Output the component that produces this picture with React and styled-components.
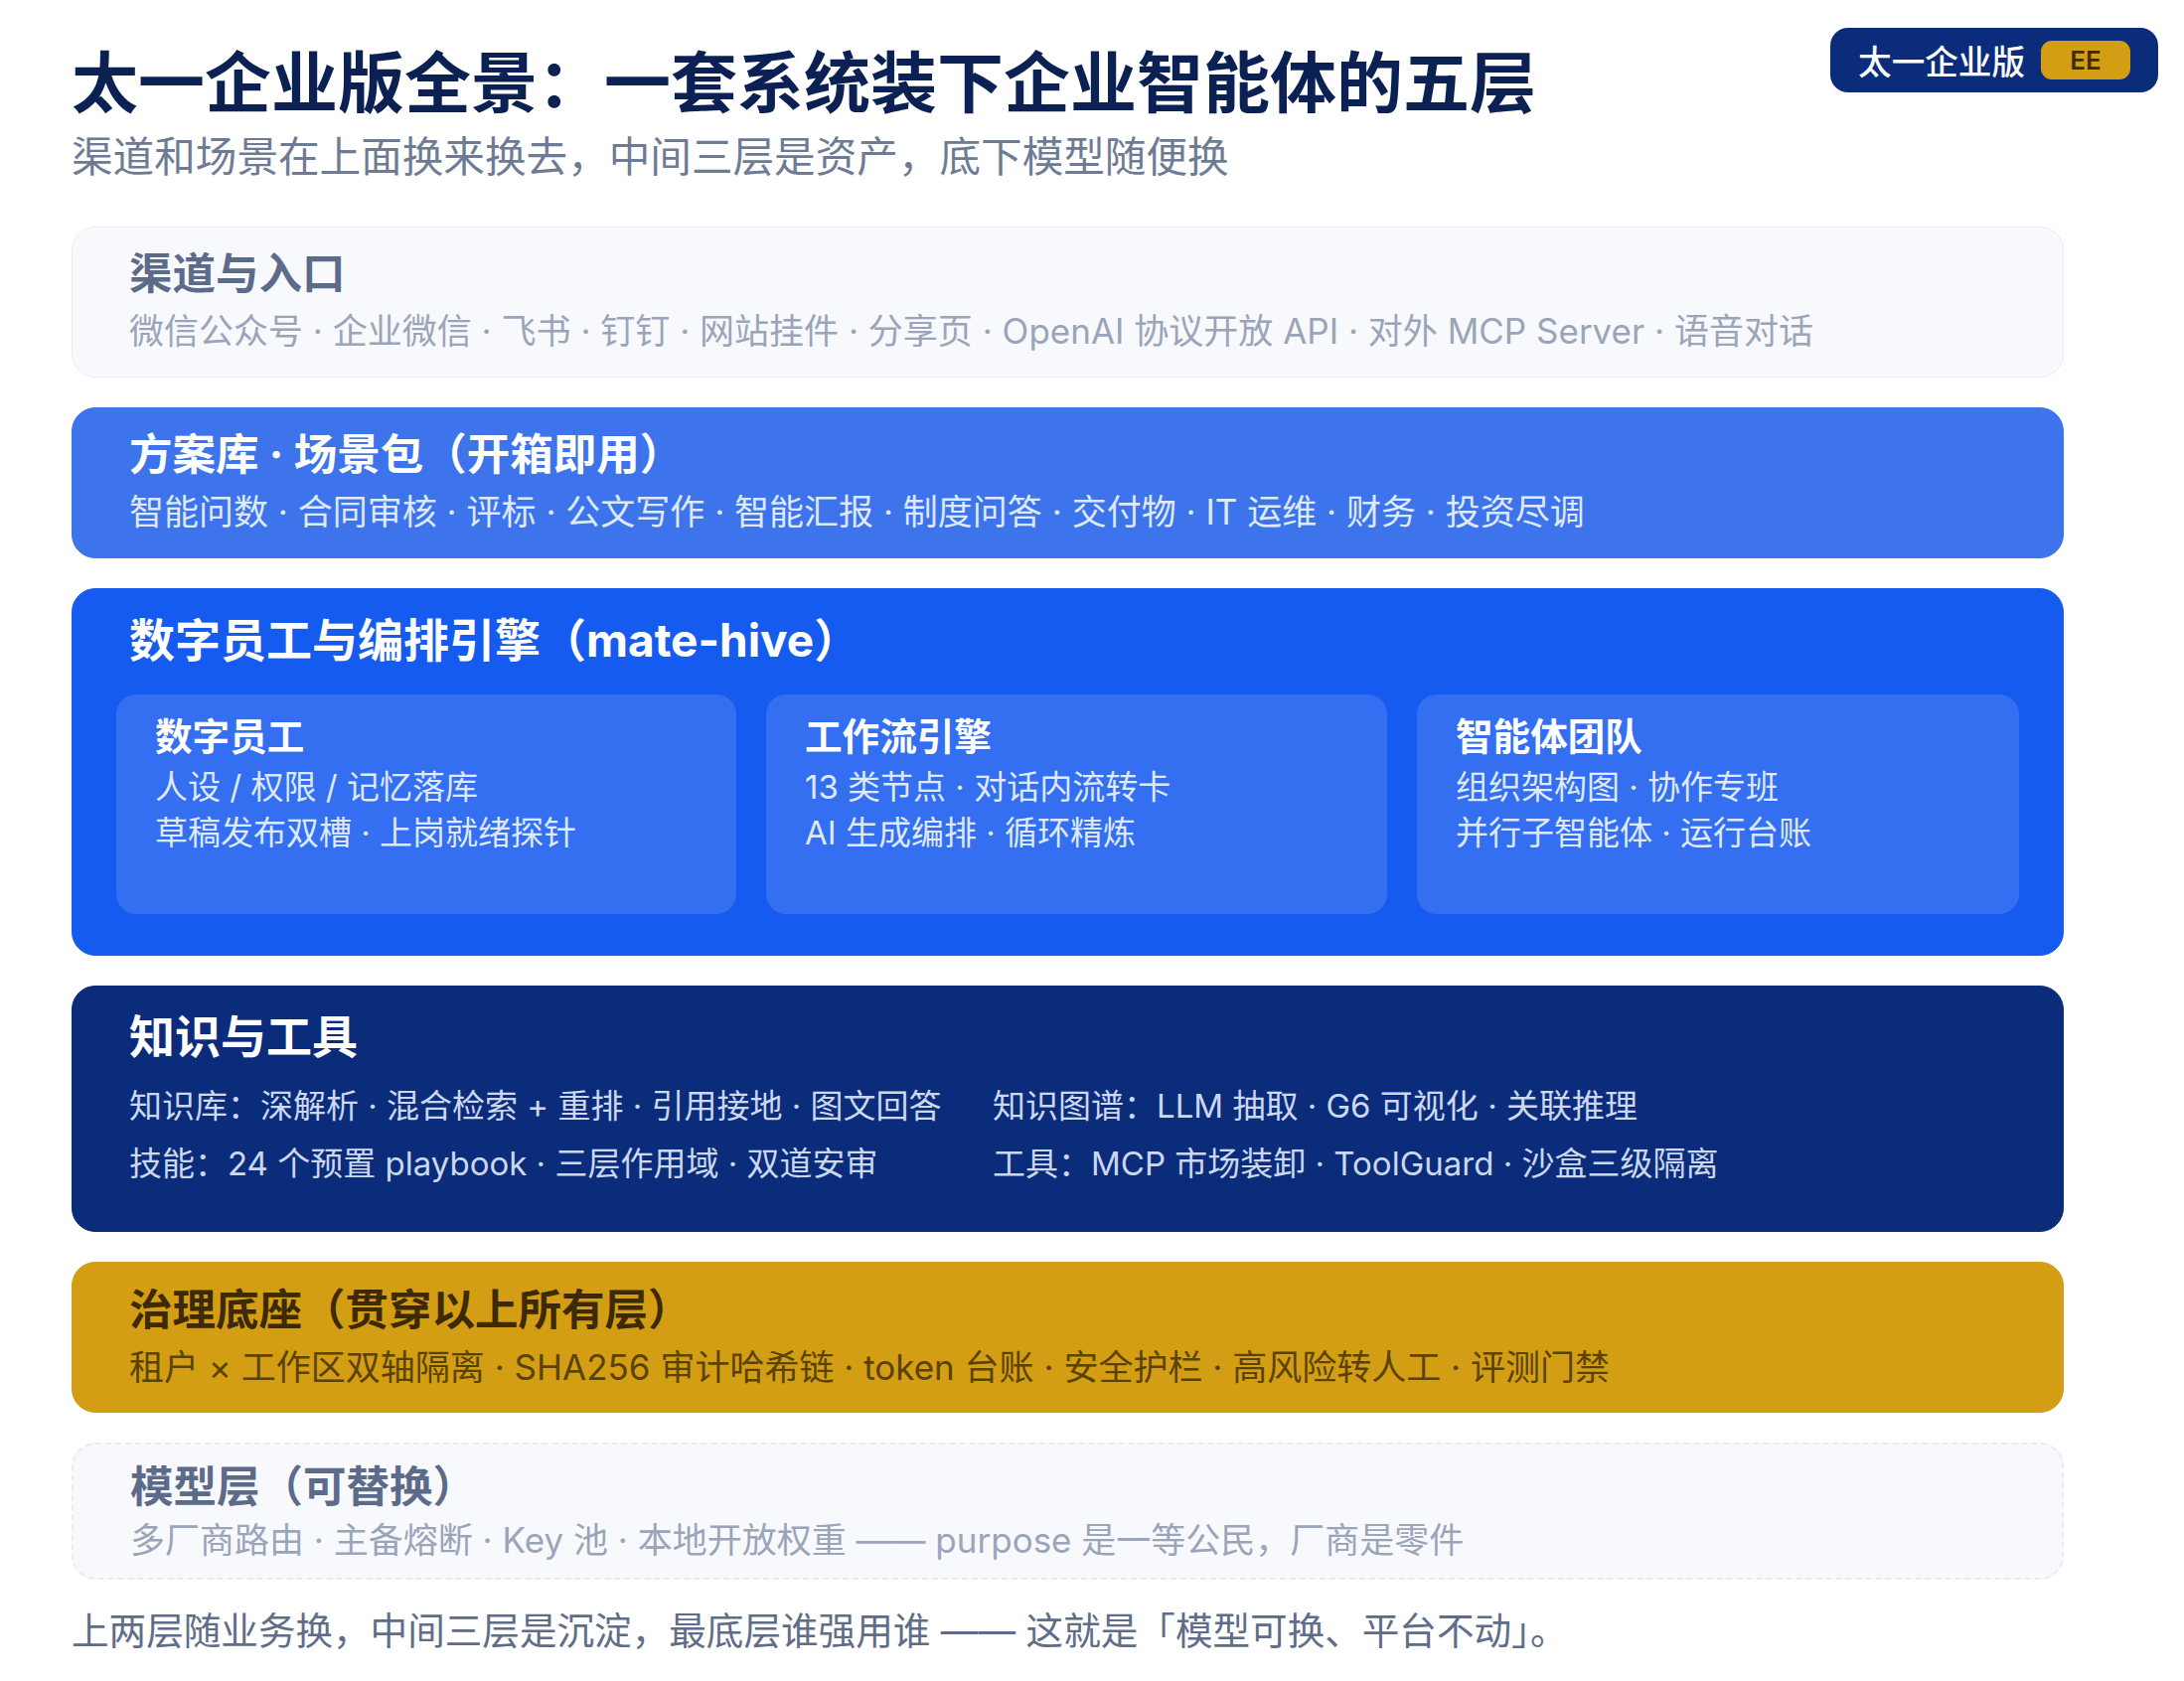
import React from "react";
import styled, { createGlobalStyle } from "styled-components";

const Global = createGlobalStyle`
  html, body { margin: 0; padding: 0; background: #fff; }
  body { font-family: Inter, "Noto Sans CJK SC", sans-serif; }
`;

const Page = styled.div`
  position: relative;
  width: 2198px;
  height: 1692px;
  box-sizing: border-box;
  padding: 44px 121px 0 72px;
  background: #fff;
`;

const Title = styled.h1`
  margin: 0;
  font-size: 67px;
  line-height: 80px;
  font-weight: 700;
  color: #0b2154;
  white-space: nowrap;
`;

const Subtitle = styled.p`
  margin: 9px 0 45px;
  font-size: 41.6px;
  line-height: 50px;
  color: #6e7b94;
  white-space: nowrap;
`;

const Badge = styled.div`
  position: absolute;
  top: 28px;
  right: 26px;
  height: 65px;
  box-sizing: border-box;
  padding: 0 28px;
  display: flex;
  align-items: center;
  gap: 16px;
  border-radius: 18px;
  background: #0b2c7a;
  color: #fff;
  font-size: 33.6px;
  font-weight: 500;
`;

const BadgeTag = styled.span`
  display: flex;
  align-items: center;
  justify-content: center;
  width: 90px;
  height: 39px;
  border-radius: 11px;
  background: #d39e14;
  color: #3d2a00;
  font-size: 26px;
  font-weight: 600;
`;

const Stack = styled.div`
  display: flex;
  flex-direction: column;
  gap: 30px;
`;

const tones = {
  ghost: { bg: "#f8f9fd", border: "1px solid #e8ecf5", title: "#5c6b8a", text: "#9aa5ba" },
  dashed: { bg: "#f8f9fd", border: "2px dashed #e8ecf5", title: "#5c6b8a", text: "#9aa5ba" },
  sky: { bg: "#3d74ec", border: "1px solid #3d74ec", title: "#ffffff", text: "#dfe9fd" },
  blue: { bg: "#155bef", border: "1px solid #155bef", title: "#ffffff", text: "#dfe9fd" },
  navy: { bg: "#0b2c7a", border: "1px solid #0b2c7a", title: "#ffffff", text: "#ccd8f0" },
  gold: { bg: "#d39e14", border: "1px solid #d39e14", title: "#3d2a00", text: "#5a4200" },
};

const Layer = styled.section`
  box-sizing: border-box;
  height: ${(p) => p.$height}px;
  padding: ${(p) => p.$top}px 57px 0;
  border-radius: 24px;
  background: ${(p) => tones[p.$tone].bg};
  border: ${(p) => tones[p.$tone].border};
`;

const LayerTitle = styled.h2`
  margin: 0;
  font-size: ${(p) => p.$size || 43.5}px;
  line-height: 54px;
  font-weight: 700;
  color: ${(p) => tones[p.$tone].title};
  white-space: nowrap;
`;

const LayerText = styled.p`
  margin: ${(p) => p.$gap}px 0 0;
  font-size: 35px;
  line-height: 50px;
  color: ${(p) => tones[p.$tone].text};
  white-space: nowrap;
`;

const CardRow = styled.div`
  display: grid;
  grid-template-columns: 624px 625px 606px;
  gap: 30px;
  margin: 28px 0 0 -13px;
`;

const Card = styled.div`
  height: 221px;
  box-sizing: border-box;
  padding: 18px 39px 0;
  border-radius: 20px;
  background: #346ff2;
`;

const CardTitle = styled.h3`
  margin: 0 0 2px;
  font-size: 37.6px;
  line-height: 50px;
  font-weight: 700;
  color: #fff;
`;

const CardLine = styled.div`
  font-size: 33px;
  line-height: 46px;
  color: #dfe9fd;
  white-space: nowrap;
`;

const ToolGrid = styled.div`
  display: grid;
  grid-template-columns: 869px 1fr;
  margin-top: 14px;
  font-size: 33px;
  line-height: 58px;
  color: #ccd8f0;
  white-space: nowrap;
`;

const Footnote = styled.p`
  margin: 22px 0 0;
  font-size: 37.6px;
  line-height: 60px;
  color: #5f6d88;
  white-space: nowrap;
`;

const cards = [
  { title: "数字员工", lines: ["人设 / 权限 / 记忆落库", "草稿发布双槽 · 上岗就绪探针"] },
  { title: "工作流引擎", lines: ["13 类节点 · 对话内流转卡", "AI 生成编排 · 循环精炼"] },
  { title: "智能体团队", lines: ["组织架构图 · 协作专班", "并行子智能体 · 运行台账"] },
];

const tools = [
  "知识库：深解析 · 混合检索 + 重排 · 引用接地 · 图文回答",
  "知识图谱：LLM 抽取 · G6 可视化 · 关联推理",
  "技能：24 个预置 playbook · 三层作用域 · 双道安审",
  "工具：MCP 市场装卸 · ToolGuard · 沙盒三级隔离",
];

export default function App() {
  return (
    <Page>
      <Global />
      <Title>太一企业版全景：一套系统装下企业智能体的五层</Title>
      <Subtitle>渠道和场景在上面换来换去，中间三层是资产，底下模型随便换</Subtitle>
      <Badge>
        太一企业版
        <BadgeTag>EE</BadgeTag>
      </Badge>
      <Stack>
        <Layer $tone="ghost" $height={152} $top={19}>
          <LayerTitle $tone="ghost">渠道与入口</LayerTitle>
          <LayerText $tone="ghost" $gap={6}>
            微信公众号 · 企业微信 · 飞书 · 钉钉 · 网站挂件 · 分享页 · OpenAI 协议开放 API · 对外 MCP Server · 语音对话
          </LayerText>
        </Layer>
        <Layer $tone="sky" $height={152} $top={19}>
          <LayerTitle $tone="sky">方案库 · 场景包（开箱即用）</LayerTitle>
          <LayerText $tone="sky" $gap={6}>
            智能问数 · 合同审核 · 评标 · 公文写作 · 智能汇报 · 制度问答 · 交付物 · IT 运维 · 财务 · 投资尽调
          </LayerText>
        </Layer>
        <Layer $tone="blue" $height={370} $top={24}>
          <LayerTitle $tone="blue" $size={46}>数字员工与编排引擎（mate-hive）</LayerTitle>
          <CardRow>
            {cards.map((card) => (
              <Card key={card.title}>
                <CardTitle>{card.title}</CardTitle>
                {card.lines.map((line) => (
                  <CardLine key={line}>{line}</CardLine>
                ))}
              </Card>
            ))}
          </CardRow>
        </Layer>
        <Layer $tone="navy" $height={248} $top={23}>
          <LayerTitle $tone="navy" $size={46}>知识与工具</LayerTitle>
          <ToolGrid>
            {tools.map((tool) => (
              <div key={tool}>{tool}</div>
            ))}
          </ToolGrid>
        </Layer>
        <Layer $tone="gold" $height={152} $top={20}>
          <LayerTitle $tone="gold">治理底座（贯穿以上所有层）</LayerTitle>
          <LayerText $tone="gold" $gap={6}>
            租户 × 工作区双轴隔离 · SHA256 审计哈希链 · token 台账 · 安全护栏 · 高风险转人工 · 评测门禁
          </LayerText>
        </Layer>
        <Layer $tone="dashed" $height={138} $top={15}>
          <LayerTitle $tone="dashed">模型层（可替换）</LayerTitle>
          <LayerText $tone="dashed" $gap={2}>
            多厂商路由 · 主备熔断 · Key 池 · 本地开放权重 —— purpose 是一等公民，厂商是零件
          </LayerText>
        </Layer>
      </Stack>
      <Footnote>上两层随业务换，中间三层是沉淀，最底层谁强用谁 —— 这就是「模型可换、平台不动」。</Footnote>
    </Page>
  );
}
